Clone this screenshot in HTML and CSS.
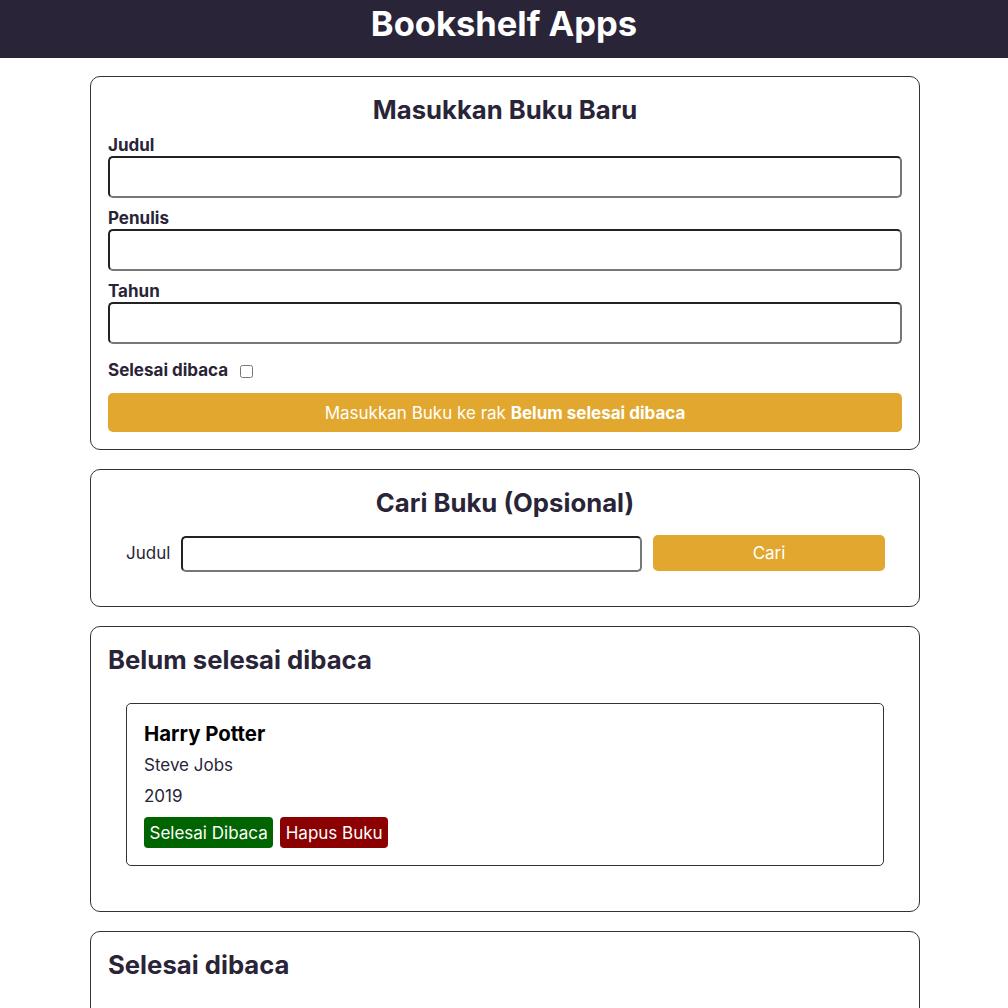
FILE: index.html
```html
<!DOCTYPE html>
<html lang="id">
<head>
<meta charset="utf-8">
<title>Bookshelf Apps</title>
<link rel="stylesheet" href="styles.css">
</head>
<body>
<header class="head-bar">
  <h1 class="head-title">Bookshelf Apps</h1>
</header>
<main class="main">
  <section class="panel input-panel">
    <h2 class="panel-title centered">Masukkan Buku Baru</h2>
    <form class="book-form">
      <label class="field-label" for="judul">Judul</label>
      <input class="field-input" id="judul" type="text">
      <label class="field-label" for="penulis">Penulis</label>
      <input class="field-input" id="penulis" type="text">
      <label class="field-label" for="tahun">Tahun</label>
      <input class="field-input" id="tahun" type="number">
      <div class="check-row">
        <label class="field-label inline" for="selesai">Selesai dibaca</label>
        <input class="check" id="selesai" type="checkbox">
      </div>
      <button class="submit-btn" type="button">Masukkan Buku ke rak <b>Belum selesai dibaca</b></button>
    </form>
  </section>

  <section class="panel search-panel">
    <h2 class="panel-title centered">Cari Buku (Opsional)</h2>
    <form class="search-row">
      <label class="search-label" for="cari">Judul</label>
      <input class="search-input" id="cari" type="text">
      <button class="search-btn" type="button">Cari</button>
    </form>
  </section>

  <section class="panel shelf-panel">
    <h2 class="panel-title">Belum selesai dibaca</h2>
    <div class="book-list">
      <article class="book-card">
        <h3 class="book-title">Harry Potter</h3>
        <p class="book-meta">Steve Jobs</p>
        <p class="book-meta">2019</p>
        <div class="book-actions">
          <button class="act-btn green" type="button">Selesai Dibaca</button>
          <button class="act-btn red" type="button">Hapus Buku</button>
        </div>
      </article>
    </div>
  </section>

  <section class="panel shelf-panel">
    <h2 class="panel-title">Selesai dibaca</h2>
    <div class="book-list empty"></div>
  </section>
</main>
</body>
</html>
```

FILE: styles.css
```css
* { box-sizing: border-box; }

html { font-size: 17px; }

body {
  margin: 0;
  font-family: Inter, "Noto Sans", sans-serif;
  font-size: 17px;
  color: #2a2438;
  background: #fff;
}

.head-bar {
  background: #2a2438;
  height: 58px;
  padding-top: 3px;
}

.head-title {
  margin: 0;
  text-align: center;
  color: #fff;
  font-size: 34.5px;
  line-height: 41px;
  font-weight: 700;
}

.main {
  width: 830px;
  margin: 18px 88px 0 90px;
  display: flex;
  flex-direction: column;
  gap: 19px;
}

.panel {
  border: 1px solid #333;
  border-radius: 10px;
  padding: 17px;
}

.panel-title {
  margin: 0;
  font-size: 25.7px;
  line-height: 31px;
  font-weight: 700;
  color: #2a2438;
}

.panel-title.centered { text-align: center; }

.book-form {
  display: flex;
  flex-direction: column;
  margin-top: 10px;
}

.field-label {
  font-size: 17px;
  line-height: 21px;
  font-weight: 700;
}

.field-input {
  height: 42px;
  border-width: 2px;
  border-style: solid;
  border-color: #222 #777 #777 #222;
  border-radius: 5px;
  margin-bottom: 10px;
  font: inherit;
  padding: 4px 8px;
}

.check-row {
  display: flex;
  align-items: center;
  gap: 8px;
  margin-top: 6px;
  height: 21px;
}

.field-label.inline { margin: 0; }

.check {
  width: 13px;
  height: 13px;
  margin: 2px 0 0 4px;
}

.submit-btn {
  margin-top: 12px;
  height: 39px;
  border: none;
  border-radius: 5px;
  background: #e2a72e;
  color: #fff;
  font: inherit;
  font-size: 17px;
}

.search-row {
  display: flex;
  align-items: center;
  padding: 0 17px 0 18px;
  margin: 16px 0 17px;
}

.search-label {
  font-size: 17px;
  margin-right: 11px;
}

.search-input {
  flex: 1;
  height: 36px;
  margin-top: 2px;
  border-width: 2px;
  border-style: solid;
  border-color: #222 #777 #777 #222;
  border-radius: 5px;
  font: inherit;
}

.search-btn {
  width: 232px;
  height: 36px;
  margin-left: 11px;
  border: none;
  border-radius: 5px;
  background: #e2a72e;
  color: #fff;
  font: inherit;
  font-size: 17px;
}

.book-list {
  padding: 28px 18px 28px;
}

.book-card {
  border: 1px solid #333;
  border-radius: 5px;
  padding: 17px;
}

.book-title {
  margin: 0 0 9px;
  font-size: 20.4px;
  line-height: 25px;
  font-weight: 700;
  color: #000;
}

.book-meta {
  margin: 0 0 10px;
  font-size: 17px;
  line-height: 21px;
}

.book-actions {
  display: flex;
  gap: 7px;
}

.act-btn {
  border: none;
  border-radius: 4px;
  color: #fff;
  font: inherit;
  font-size: 17px;
  height: 31px;
  padding: 0 5.5px;
}

.act-btn.green { background: #006400; }
.act-btn.red { background: #8b0000; }
```
